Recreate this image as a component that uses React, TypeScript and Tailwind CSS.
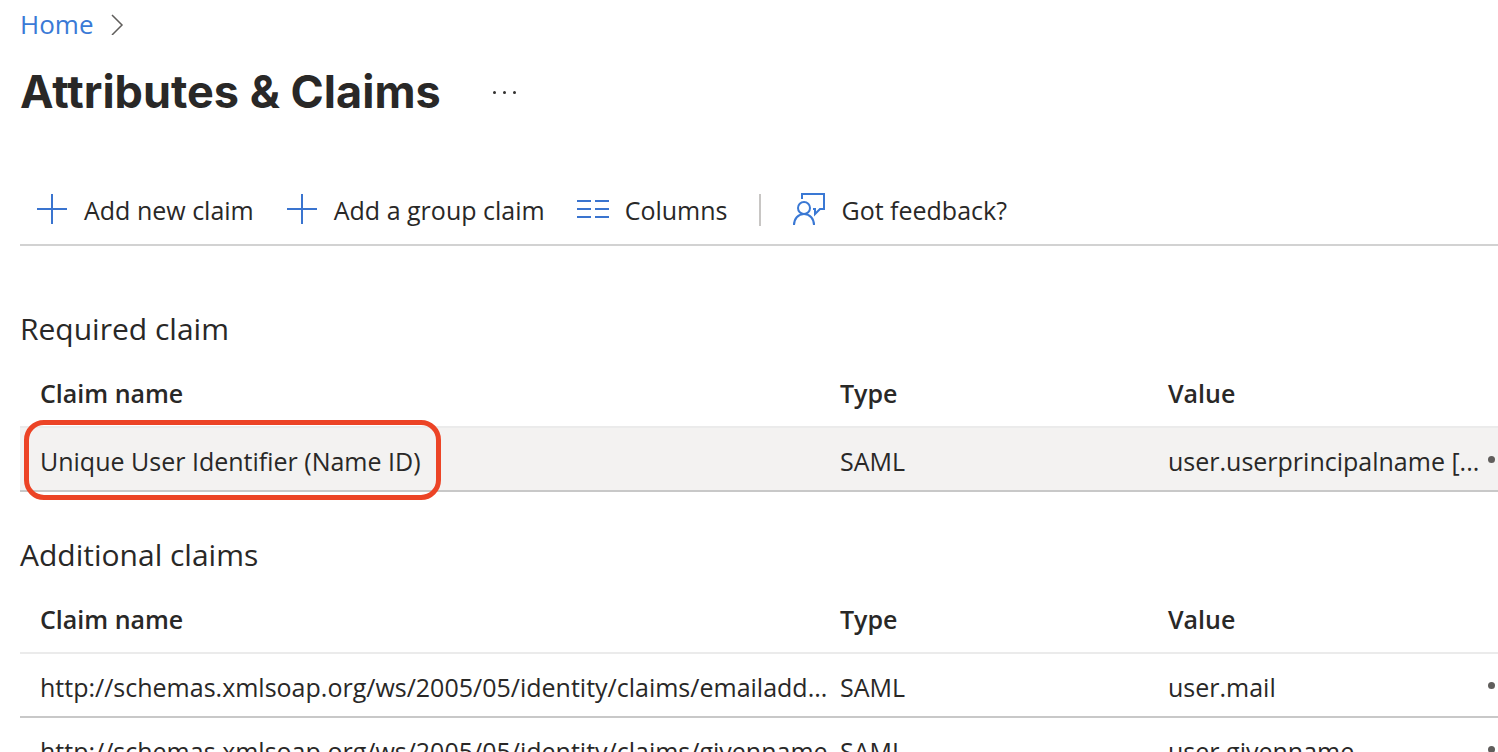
import type { ReactNode } from "react";

type Claim = {
  name: string;
  type: string;
  value: string;
};

const requiredClaims: Claim[] = [
  {
    name: "Unique User Identifier (Name ID)",
    type: "SAML",
    value: "user.userprincipalname [...",
  },
];

const additionalClaims: Claim[] = [
  {
    name: "http://schemas.xmlsoap.org/ws/2005/05/identity/claims/emailadd...",
    type: "SAML",
    value: "user.mail",
  },
  {
    name: "http://schemas.xmlsoap.org/ws/2005/05/identity/claims/givenname",
    type: "SAML",
    value: "user.givenname",
  },
];

function PlusIcon() {
  return (
    <svg className="size-8 shrink-0" viewBox="0 0 32 32" fill="none" stroke="#3a74cf" strokeWidth="2" aria-hidden="true">
      <path d="M16 0v30M1 15h30" />
    </svg>
  );
}

function ColumnsIcon() {
  return (
    <svg className="size-8 shrink-0" viewBox="0 0 32 32" fill="none" stroke="#3a74cf" strokeWidth="2" aria-hidden="true">
      <path d="M0 7h14M18 7h14M0 15h14M18 15h14M0 23h14M18 23h14" />
    </svg>
  );
}

function FeedbackIcon() {
  return (
    <svg className="size-8 shrink-0 overflow-visible" viewBox="0 0 32 32" fill="none" stroke="#3a78d4" strokeWidth="2" aria-hidden="true">
      <path d="M9 5V0h22v15h-4l-5 5v-5h-2" />
      <circle cx="11" cy="14" r="6" />
      <path d="M1 31c0-6 4-11 10-11s10 5 10 11" />
    </svg>
  );
}

function ToolbarButton({ icon, label }: { icon: ReactNode; label: string }) {
  return (
    <button type="button" className="flex items-center gap-4 whitespace-nowrap text-[25px] leading-9">
      {icon}
      {label}
    </button>
  );
}

function ClaimsTable({
  title,
  claims,
  selected,
}: {
  title: string;
  claims: Claim[];
  selected?: string;
}) {
  return (
    <section>
      <h2 className="text-[30px] leading-10">{title}</h2>
      <table className="mt-3 w-full table-fixed border-collapse text-left text-[25px] leading-9" aria-label={title}>
        <colgroup>
          <col />
          <col className="w-[328px]" />
          <col className="w-[328px]" />
          <col className="w-[22px]" />
        </colgroup>
        <thead>
          <tr className="h-[66px] border-b-2 border-[#ebebeb]">
            <th className="pb-[2px] pl-5 font-semibold">Claim name</th>
            <th className="pb-[2px] pl-5 font-semibold">Type</th>
            <th className="pb-[2px] pl-5 font-semibold">Value</th>
            <th />
          </tr>
        </thead>
        <tbody>
          {claims.map((claim) => {
            const isSelected = claim.name === selected;
            return (
              <tr
                key={claim.name}
                className={`h-16 border-b-2 border-[#c8c8c8] ${isSelected ? "bg-[#f3f2f1]" : ""}`}
              >
                <td className="whitespace-nowrap pl-5 pt-1">
                  <span className="relative">
                    {claim.name}
                    {isSelected && (
                      <span className="pointer-events-none absolute -bottom-[22px] -left-4 -right-5 -top-6 rounded-[20px] border-[5px] border-[#ec4426]" />
                    )}
                  </span>
                </td>
                <td className="pl-5 pt-1">{claim.type}</td>
                <td className="whitespace-nowrap pl-5 pt-1">{claim.value}</td>
                <td className="overflow-hidden pl-3">
                  <button type="button" className="flex gap-1" aria-label={`Actions for ${claim.name}`}>
                    <span className="size-[7px] shrink-0 rounded-full bg-[#605e5c]" />
                    <span className="size-[7px] shrink-0 rounded-full bg-[#605e5c]" />
                    <span className="size-[7px] shrink-0 rounded-full bg-[#605e5c]" />
                  </button>
                </td>
              </tr>
            );
          })}
        </tbody>
      </table>
    </section>
  );
}

export default function App() {
  return (
    <div className="h-screen overflow-hidden bg-white pl-5 font-['Open_Sans','Noto_Sans',sans-serif] text-[#292827]">
      <nav className="flex items-center gap-4 pt-1 text-[26px] leading-10" aria-label="Breadcrumb">
        <a href="#home" className="text-[#3a7ad6]">
          Home
        </a>
        <svg className="h-[22px] w-4" viewBox="0 0 16 22" fill="none" stroke="#605e5c" strokeWidth="1.5" aria-hidden="true">
          <path d="M3 2l10 10-10 10" />
        </svg>
      </nav>

      <header className="mt-4 flex items-center gap-13">
        <h1 className="font-['Inter',sans-serif] text-[45px] font-bold leading-16">Attributes &amp; Claims</h1>
        <button type="button" className="flex gap-[7px]" aria-label="More options">
          <span className="size-[3px] rounded-full bg-[#323130]" />
          <span className="size-[3px] rounded-full bg-[#323130]" />
          <span className="size-[3px] rounded-full bg-[#323130]" />
        </button>
      </header>

      <div className="mt-12 flex items-center gap-8 border-b-2 border-[#d2d2d2] pb-4 pl-4 pt-5" role="toolbar">
        <ToolbarButton icon={<PlusIcon />} label="Add new claim" />
        <ToolbarButton icon={<PlusIcon />} label="Add a group claim" />
        <ToolbarButton icon={<ColumnsIcon />} label="Columns" />
        <div className="h-8 w-[2px] bg-[#c8c6c4]" />
        <ToolbarButton icon={<FeedbackIcon />} label="Got feedback?" />
      </div>

      <main className="flex flex-col gap-[43px] pt-[63px]">
        <ClaimsTable title="Required claim" claims={requiredClaims} selected="Unique User Identifier (Name ID)" />
        <ClaimsTable title="Additional claims" claims={additionalClaims} />
      </main>
    </div>
  );
}
